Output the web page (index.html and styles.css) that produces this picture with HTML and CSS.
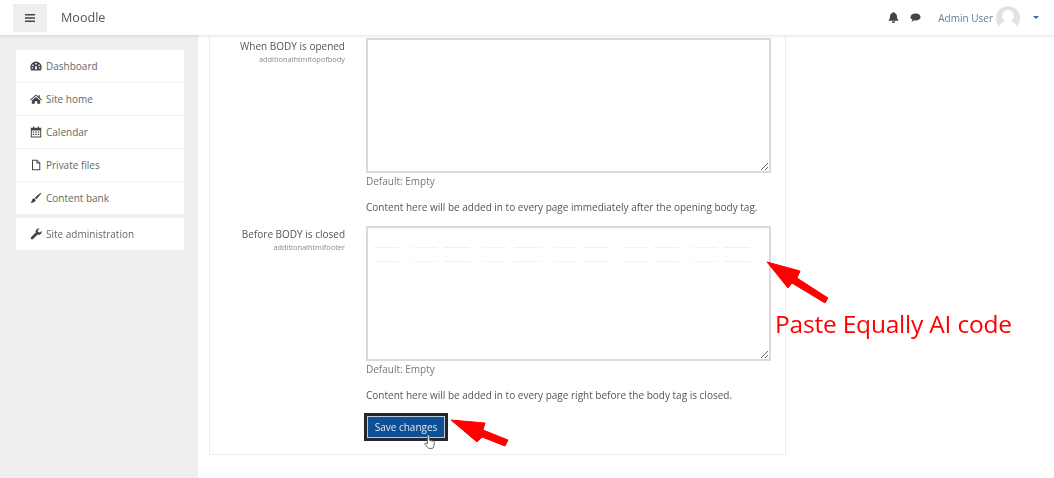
FILE: index.html
```html
<!DOCTYPE html>
<html lang="en">
<head>
<meta charset="utf-8">
<title>Moodle</title>
<link rel="stylesheet" href="styles.css">
</head>
<body>
<div class="app">
  <header class="topbar">
    <button class="menu-btn" aria-label="Menu">
      <svg class="menu-icon" viewBox="0 0 10 8"><path d="M0 0h10v1.500H0zM0 3.200h10v1.500H0zM0 6.400h10v1.500H0z"/></svg>
    </button>
    <span class="brand">Moodle</span>
    <div class="top-actions">
      <svg class="top-icon" viewBox="0 0 12 12"><path d="M6 0a1 1 0 0 1 1 1c2 .4 2.800 2 2.800 4 0 2 .7 3 1.500 3.800v.7H.7v-.7C1.500 8 2.200 7 2.200 5c0-2 .8-3.600 2.800-4a1 1 0 0 1 1-1zM4.600 10.200h2.800A1.400 1.400 0 0 1 6 12a1.400 1.400 0 0 1-1.400-1.800z"/></svg>
      <svg class="top-icon chat" viewBox="0 0 12 12"><path d="M6 1.500c3 0 5.500 1.700 5.500 3.900S9 9.300 6 9.300c-.6 0-1 0-1.500-.2C3.600 10 2.500 10.500 1.300 10.600c.7-.7 1.200-1.500 1.300-2.400C1.300 7.500.5 6.500.5 5.400.5 3.200 3 1.500 6 1.500z"/></svg>
      <a class="user-name">Admin User</a>
      <svg class="avatar" viewBox="0 0 24 24"><circle cx="12" cy="12" r="12" fill="#e2e2e2"/><circle cx="12" cy="10" r="6" fill="#fff"/><path d="M3.500 21c1-5 4.500-6 8.500-6s7.500 1 8.500 6a12 12 0 0 1-17 0z" fill="#fff"/></svg>
      <span class="caret"></span>
    </div>
  </header>
  <div class="layout">
    <nav class="sidebar">
      <ul class="nav-group">
        <li class="nav-item">
          <svg class="nav-icon" viewBox="0 0 12 12"><path fill-rule="evenodd" d="M6 1.500a5.700 5.700 0 0 0-5.700 5.700c0 1.200.3 2.200.9 3.200h9.600c.6-1 .9-2 .9-3.200A5.700 5.700 0 0 0 6 1.500zM5.200 3h1.600v1.400H5.200zM2.900 4.300l1.100.9-.9 1-1.100-.9zm6.200 0l.9 1-1.100.9-.9-1zM1.700 7.200h1.500v1.300H1.700zm7.100 0h1.500v1.300H8.800zM5.400 6h1.200l.4 2.500a1 1 0 0 1-2 0z"/></svg>
          Dashboard
        </li>
        <li class="nav-item">
          <svg class="nav-icon" viewBox="0 0 12 12"><path d="M6 1.500L0 6.700l.6.700L6 2.800l5.400 4.600.6-.7-2.200-1.900V2.200H8.400v1.500zM1.800 7.500v3.300h3V8.300h2.400v2.500h3V7.500L6 3.900z"/></svg>
          Site home
        </li>
        <li class="nav-item">
          <svg class="nav-icon" viewBox="0 0 12 12"><path d="M3 .5h1.200v1.200h3.600V.5H9v1.200h2.200v9.800H.8V1.700H3zM1.800 4.500v6h8.400v-6zm1 1h1.400v1.200H2.800zm2.500 0h1.400v1.200H5.300zm2.500 0h1.400v1.200H7.800zM2.800 7.800h1.400V9H2.800zm2.500 0h1.400V9H5.300zm2.500 0h1.400V9H7.800z"/></svg>
          Calendar
        </li>
        <li class="nav-item">
          <svg class="nav-icon" viewBox="0 0 12 12"><path d="M2 .7h5.200L10.300 3.800v7.500H2zm1 1v8.600h6.300V4.500H6.500V1.700zm4.500.4v1.400h1.400z"/></svg>
          Private files
        </li>
        <li class="nav-item">
          <svg class="nav-icon" viewBox="0 0 12 12"><path d="M11.500.5c.3.300-3.500 5.300-5 6.700L4.900 5.700C6.500 4 11.200.2 11.500.5zM4.300 6.300l1.500 1.500c-.2 2.200-2.800 3.400-5.300 3 1.200-.8 1-1.800 1.500-2.800.5-1 1.200-1.600 2.300-1.700z"/></svg>
          Content bank
        </li>
      </ul>
      <ul class="nav-group">
        <li class="nav-item">
          <svg class="nav-icon" viewBox="0 0 12 12"><path d="M11.600 3c.3 1.500-.2 2.800-1.500 3.400-.9.400-1.700.3-2.400 0L3 11a1.300 1.300 0 0 1-1.900-1.900l4.700-4.600c-.4-1-.2-2 .6-2.900C7.300.8 8.400.4 9.500.7L7.700 2.500l.4 1.500 1.500.4z"/></svg>
          Site administration
        </li>
      </ul>
    </nav>
    <main class="main">
      <section class="card">
        <div class="field">
          <div class="field-label">
            <label>When BODY is opened</label>
            <small>additionalhtmltopofbody</small>
          </div>
          <div class="field-body">
            <textarea class="code-input"></textarea>
            <p class="default">Default: Empty</p>
            <p class="help">Content here will be added in to every page immediately after the opening body tag.</p>
          </div>
        </div>
        <div class="field">
          <div class="field-label">
            <label>Before BODY is closed</label>
            <small>additionalhtmlfooter</small>
          </div>
          <div class="field-body">
            <div class="code-wrap">
              <textarea class="code-input"></textarea>
              <span class="smudge smudge-a"></span>
              <span class="smudge smudge-b"></span>
            </div>
            <p class="default">Default: Empty</p>
            <p class="help">Content here will be added in to every page right before the body tag is closed.</p>
          </div>
        </div>
        <div class="actions">
          <button class="save-btn">Save changes</button>
        </div>
      </section>
    </main>
  </div>
</div>
<svg class="overlay-arrow arrow-code" viewBox="0 0 66 44"><path d="M1 1L34 10L31 17L62 37L59 42L26 22L22 27z" fill="#f00" stroke="#f00" stroke-width="1" stroke-linejoin="round"/></svg>
<svg class="overlay-arrow arrow-save" viewBox="0 0 60 30"><path d="M1 1L35 4L33 11L58 21L55 27L32 18L27 23z" fill="#f00" stroke="#f00" stroke-width="1" stroke-linejoin="round"/></svg>
<svg class="overlay-arrow cursor" viewBox="0 0 12 16"><path d="M3.500 1.500c.8-.6 1.700 0 1.700.8v4l4.300.9c.8.2 1.200.9 1 1.700l-1 4.300c-.2.700-.8 1.200-1.500 1.200H5.200c-.6 0-1-.3-1.400-.8L1 10.200c-.6-.9.500-1.900 1.400-1.100l1 .9V2.300c0-.3 0-.6.100-.8z" fill="#fff" stroke="#666" stroke-width="1"/></svg>
<div class="annotation">Paste Equally AI code</div>
</body>
</html>
```
FILE: styles.css
```css
* { box-sizing: border-box; }
html, body { margin: 0; height: 100%; overflow: hidden; background: #fff; }
body { font-family: "Open Sans", "Liberation Sans", sans-serif; color: #555; font-size: 10px; }

.app { height: 478px; display: flex; flex-direction: column; filter: blur(0.45px); }

.topbar { height: 35px; flex: none; display: flex; align-items: center; padding: 0 15px 0 13px; background: #fff; box-shadow: 0 1px 3px rgba(0,0,0,.12); position: relative; z-index: 1; }
.menu-btn { width: 34px; height: 28px; border: 0; background: #eeeeee; padding: 0; display: flex; align-items: center; justify-content: center; }
.menu-icon { width: 10px; height: 8px; fill: #444; }
.brand { margin-left: 14px; font-size: 12.6px; color: #555; }
.top-actions { margin-left: auto; display: flex; align-items: center; }
.top-icon { width: 11px; height: 11px; fill: #444; }
.chat { margin-left: 11px; }
.user-name { margin-left: 17px; color: #64819b; }
.avatar { width: 24px; height: 24px; margin-left: 3px; }
.caret { margin-left: 13px; width: 0; height: 0; border-left: 3px solid transparent; border-right: 3px solid transparent; border-top: 3px solid #3d6a96; }

.layout { flex: 1; display: flex; min-height: 0; }
.sidebar { width: 198px; flex: none; background: #efefef; padding: 15px 14px 0 16px; }
.nav-group { list-style: none; margin: 0 0 4px; padding: 0; display: flex; flex-direction: column; gap: 1px; background: #f2f2f2; }
.nav-item { height: 32px; background: #fff; display: flex; align-items: center; gap: 4px; padding: 0 0 1px 14px; color: #666; }
.nav-icon { width: 12px; height: 12px; fill: #444; flex: none; }

.main { flex: 1; padding-left: 11px; min-width: 0; }
.card { width: 577px; height: 420px; border: 1px solid #ececec; border-top: 0; padding-top: 3px; }
.field { display: flex; }
.field-label { width: 135px; text-align: right; padding-top: 1px; display: flex; flex-direction: column; }
.field-label label { line-height: 14px; color: #555; }
.field-label small { font-size: 7.400px; line-height: 12px; color: #8a8a8a; }
.field-body { margin-left: 21px; width: 405px; }
.code-input { display: block; width: 405px; height: 135px; border: 2px solid #dadada; background: #fff; margin: 0; padding: 0; resize: vertical; }
.code-wrap { position: relative; }
.smudge { position: absolute; left: 8px; height: 1px; background: repeating-linear-gradient(90deg, #f0f0f0 0 24px, #fbfbfb 24px 41px, #f4f4f4 41px 63px, #fff 63px 70px); }
.smudge-a { top: 21px; width: 385px; }
.smudge-b { top: 35px; width: 390px; }
.default { margin: 1px 0 0; line-height: 14px; height: 26px; color: #777; }
.help { margin: 0; line-height: 14px; height: 26px; color: #555; }
.field + .field .help { height: 14px; }
.actions { padding: 14px 0 0 157px; }
.save-btn { display: block; width: 78px; height: 22px; padding: 0; font: inherit; color: #dfe9f5; background: #0f4f96; border: 1px solid #b9c9dc; outline: 3px solid #262626; box-shadow: inset 0 0 0 1px #0f4f96; }

.overlay-arrow { position: absolute; }
.arrow-code { left: 766px; top: 261px; width: 66px; height: 44px; }
.arrow-save { left: 450px; top: 419px; width: 60px; height: 30px; }
.cursor { left: 424px; top: 434px; width: 12px; height: 16px; }
.annotation { position: absolute; left: 775px; top: 309px; font-family: "Open Sans", sans-serif; font-size: 24.5px; line-height: 30px; color: #f00; white-space: nowrap; letter-spacing: -.2px; }
```
